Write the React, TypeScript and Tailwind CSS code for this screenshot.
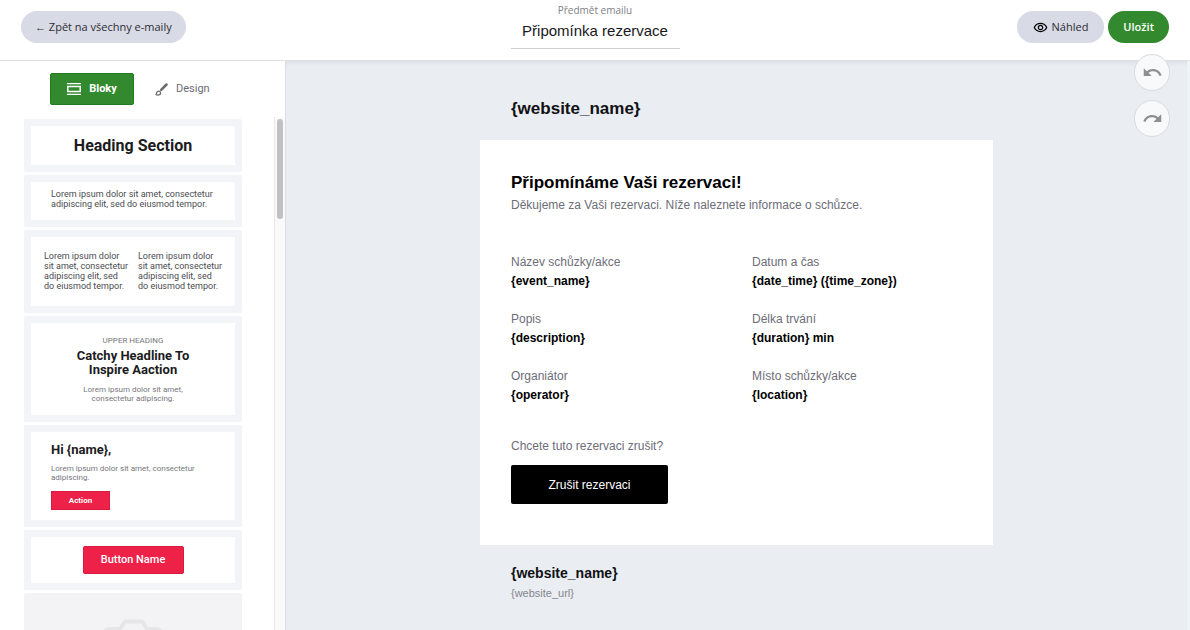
import type { ReactNode } from 'react';
import { MdOutlineRemoveRedEye, MdRedo, MdUndo } from 'react-icons/md';

const details = [
  { label: 'Název schůzky/akce', value: '{event_name}' },
  { label: 'Datum a čas', value: '{date_time} ({time_zone})' },
  { label: 'Popis', value: '{description}' },
  { label: 'Délka trvání', value: '{duration} min' },
  { label: 'Organiátor', value: '{operator}' },
  { label: 'Místo schůzky/akce', value: '{location}' },
];

const columnText = 'Lorem ipsum dolor\nsit amet, consectetur\nadipiscing elit, sed\ndo eiusmod tempor.';

function BlocksIcon() {
  return (
    <svg viewBox="0 0 14 12" className="w-3.5 h-3" fill="none" stroke="currentColor">
      <path d="M0 .6h14M0 11.4h14" strokeWidth="1.2" />
      <path d="M.8 3.5h12.4v5H.8z" strokeWidth="1.5" />
    </svg>
  );
}

function BrushIcon() {
  return (
    <svg viewBox="0 0 13 13" className="size-[13px]" fill="none" stroke="currentColor">
      <path d="M11.5 1.5 6.2 6.8" strokeWidth="2.5" strokeLinecap="round" />
      <path
        d="M.8 11.3c.7-.2.9-.6.9-1.3a1.9 1.9 0 1 1 1.9 1.9c-1 .3-2 .1-2.8-.6z"
        strokeWidth="1.2"
        strokeLinejoin="round"
      />
    </svg>
  );
}

function CameraIcon() {
  return (
    <svg viewBox="0 0 60 48" className="w-[60px] h-12" fill="none" stroke="#e6e6e8" strokeWidth="4">
      <path d="M6 10h11l5-7.5h17l5 7.5h10a4 4 0 0 1 4 4v28a4 4 0 0 1-4 4H6a4 4 0 0 1-4-4V14a4 4 0 0 1 4-4z" />
      <circle cx="30" cy="27" r="11" />
    </svg>
  );
}

function Block({ children }: { children: ReactNode }) {
  return (
    <li className="rounded-xs bg-[#f3f4f8] p-[7px]">
      <div className="bg-white">{children}</div>
    </li>
  );
}

function Header() {
  return (
    <header className="grid h-[61px] shrink-0 grid-cols-[1fr_169px_1fr] items-start border-b border-[#dfe0e4] bg-white px-[21px] font-['Open_Sans',sans-serif] text-[11px]">
      <button className="mt-[11px] h-8 justify-self-start rounded-full bg-[#d8dae5] px-3.5 text-[#2b2c33]">
        ← Zpět na všechny e-maily
      </button>
      <div className="flex flex-col pt-[3px] text-center">
        <label htmlFor="subject" className="text-[10px] leading-[14px] text-[#808086]">
          Předmět emailu
        </label>
        <input
          id="subject"
          defaultValue="Připomínka rezervace"
          className="h-8 w-full border-b border-[#cfd0d6] pb-1 text-center font-['Liberation_Sans',sans-serif] text-[15px] text-[#17171c] outline-none"
        />
      </div>
      <div className="mt-[11px] flex gap-1 justify-self-end">
        <button className="flex h-8 items-center gap-1 rounded-full bg-[#d8dae5] px-4 text-[#2b2c33]">
          <MdOutlineRemoveRedEye className="size-[15px] text-black" />
          Náhled
        </button>
        <button className="h-8 rounded-full bg-[#338a2e] px-[15px] font-semibold text-white">
          Uložit
        </button>
      </div>
    </header>
  );
}

function Sidebar() {
  return (
    <aside className="flex w-[286px] shrink-0 flex-col border-r border-[#dcdee4] bg-white font-[Roboto,sans-serif]">
      <div className="flex px-[50px] py-3 text-[11px]">
        <button className="flex h-8 w-[84px] items-center justify-center gap-2 rounded-xs border border-[#257a20] bg-[#338a2e] font-bold text-white">
          <BlocksIcon />
          Bloky
        </button>
        <button className="ml-[21px] flex h-8 items-center gap-2 text-[#6a6b72]">
          <BrushIcon />
          Design
        </button>
      </div>

      <div className="flex min-h-0 flex-1 justify-between pl-6">
        <ul className="flex w-[218px] flex-col gap-[3px] overflow-hidden pt-0.5">
          <Block>
            <h2 className="py-2.5 text-center text-base leading-[19px] font-bold text-[#1c1c1e]">
              Heading Section
            </h2>
          </Block>
          <Block>
            <p className="px-5 pt-[7px] pb-[11px] text-[9px] leading-[10px] whitespace-pre-line text-[#4b4b50]">
              {'Lorem ipsum dolor sit amet, consectetur\nadipiscing elit, sed do eiusmod tempor.'}
            </p>
          </Block>
          <Block>
            <div className="grid grid-cols-2 gap-2.5 px-[13px] pt-3.5 pb-[15px] text-[9px] leading-[10px] whitespace-pre text-[#4b4b50]">
              <p>{columnText}</p>
              <p>{columnText}</p>
            </div>
          </Block>
          <Block>
            <div className="pt-[13px] pb-3 text-center text-[8px] whitespace-pre-line text-[#76767c]">
              <p className="leading-[10px]">UPPER HEADING</p>
              <h3 className="mt-[3px] text-[13px] leading-[14px] font-bold text-[#1c1c1e]">
                {'Catchy Headline To\nInspire Aaction'}
              </h3>
              <p className="mt-2 leading-[9px]">
                {'Lorem ipsum dolor sit amet,\nconsectetur adipiscing.'}
              </p>
            </div>
          </Block>
          <Block>
            <div className="px-5 py-2.5 text-[8px]">
              <h3 className="text-[13px] leading-4 font-bold text-[#1c1c1e]">{'Hi {name},'}</h3>
              <p className="mt-1.5 leading-[9px] whitespace-pre-line text-[#76767c]">
                {'Lorem ipsum dolor sit amet, consectetur\nadipiscing.'}
              </p>
              <button className="mt-[9px] block h-[19px] w-[59px] border border-[#d91a40] bg-[#ee2148] font-bold text-white">
                Action
              </button>
            </div>
          </Block>
          <Block>
            <div className="flex justify-center py-[9px]">
              <button className="h-7 w-[101px] rounded-xs border border-[#d91a40] bg-[#ee2148] text-[11px] font-medium text-white">
                Button Name
              </button>
            </div>
          </Block>
          <li className="flex shrink-0 justify-center rounded-xs bg-[#f3f3f5] py-[26px]">
            <CameraIcon />
          </li>
        </ul>
        <div className="flex w-[11px] justify-center border-l border-[#e8e8ea] bg-[#fafafb] pt-0.5">
          <div className="h-[100px] w-1.5 rounded-full bg-[#c1c1c3]" />
        </div>
      </div>
    </aside>
  );
}

function EmailPreview() {
  return (
    <main className="min-w-0 flex-1 overflow-hidden border-r-3 border-[#f0f2f5] bg-[#eaedf2] font-['Liberation_Sans',sans-serif] text-xs text-[#6d6d78] shadow-[inset_0_6px_6px_-5px_rgba(0,0,0,0.08)]">
      <div className="mx-auto max-w-[513px]">
        <h1 className="px-[31px] pt-[38px] pb-[21px] text-[17px] leading-5 font-bold text-[#111114]">
          {'{website_name}'}
        </h1>
        <section className="bg-white px-[31px] pt-[33px] pb-[41px]">
          <h2 className="text-[17px] leading-5 font-bold text-black">Připomínáme Vaši rezervaci!</h2>
          <p className="mt-[3px] leading-[19px]">
            Děkujeme za Vaši rezervaci. Níže naleznete informace o schůzce.
          </p>
          <dl className="mt-[38px] grid grid-cols-2 gap-x-[31px] gap-y-[19px] leading-[19px]">
            {details.map((item) => (
              <div key={item.label}>
                <dt>{item.label}</dt>
                <dd className="font-bold text-black">{item.value}</dd>
              </div>
            ))}
          </dl>
          <p className="mt-8 leading-[19px]">Chcete tuto rezervaci zrušit?</p>
          <button className="mt-[9px] block h-[39px] w-[157px] rounded-xs bg-black text-white">
            Zrušit rezervaci
          </button>
        </section>
        <footer className="px-[31px] pt-[18px]">
          <p className="text-sm leading-5 font-bold text-[#111114]">{'{website_name}'}</p>
          <p className="mt-0.5 text-[11px] leading-4 text-[#85868e]">{'{website_url}'}</p>
        </footer>
      </div>
    </main>
  );
}

export default function App() {
  return (
    <div className="relative flex h-screen flex-col overflow-hidden">
      <Header />
      <div className="flex min-h-0 flex-1">
        <Sidebar />
        <EmailPreview />
      </div>
      {/* History buttons float over the canvas */}
      <div className="absolute top-[54px] right-5 flex flex-col gap-[9px] text-[#8f8f92]">
        <button
          aria-label="Zpět"
          className="flex h-[37px] w-9 items-center justify-center rounded-full border border-[#d8dade] bg-[#f8f9fa]"
        >
          <MdUndo className="size-[21px]" />
        </button>
        <button
          aria-label="Znovu"
          className="flex h-[37px] w-9 items-center justify-center rounded-full border border-[#d8dade] bg-[#f8f9fa]"
        >
          <MdRedo className="size-[21px]" />
        </button>
      </div>
    </div>
  );
}
